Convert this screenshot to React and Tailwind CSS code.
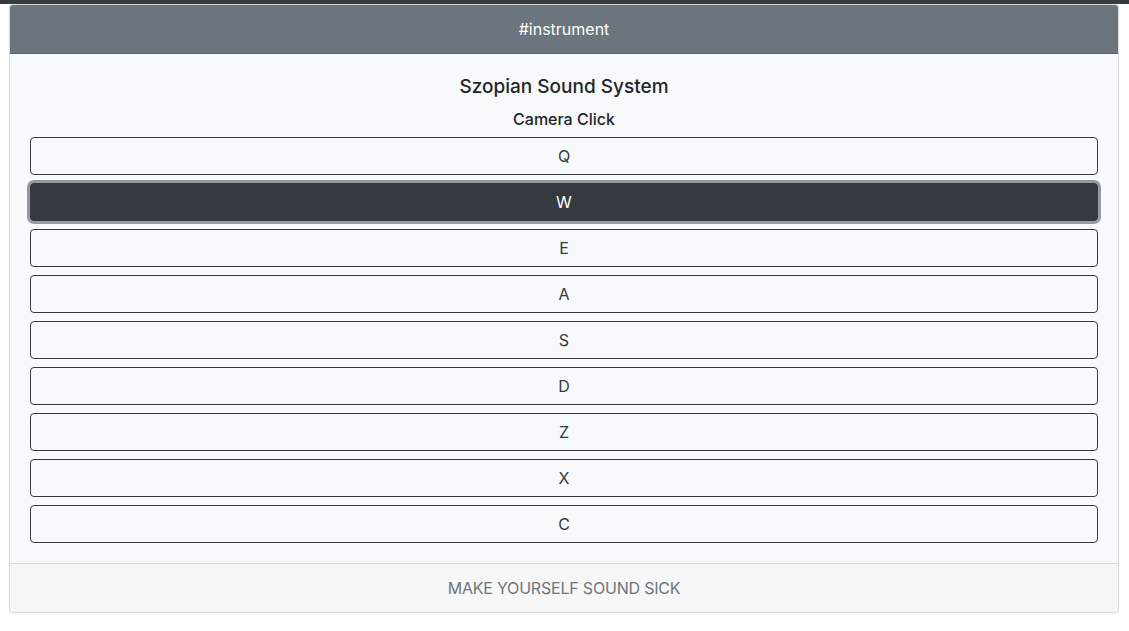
const KEYS = ['Q', 'W', 'E', 'A', 'S', 'D', 'Z', 'X', 'C'];

function PadButton({ label, active }) {
  return (
    <button
      className={`block h-[38px] w-full rounded-[4px] border border-[#343a40] text-base leading-6 ${
        active
          ? 'bg-[#343a40] text-white shadow-[0_0_0_3px_rgba(130,138,145,0.85)]'
          : 'bg-transparent text-[#343a40]'
      }`}
    >
      {label}
    </button>
  );
}

export default function App() {
  return (
    <div className="min-h-screen bg-white font-['Inter','Helvetica_Neue',Arial,sans-serif] text-[#212529]">
      <div className="h-[4px] bg-[#343a40]" />
      <div className="ml-[9px] mr-[10px] overflow-hidden rounded-[4px] border border-black/[0.125] bg-[#f8f9fa]">
        {/* header */}
        <div className="border-b border-black/[0.125] bg-[#6c757d] px-5 py-3 text-center text-base leading-6 text-white">
          #instrument
        </div>

        {/* body */}
        <div className="px-5 py-5">
          <h1 className="mt-[1px] text-center text-[19px] font-medium leading-6">Szopian Sound System</h1>
          <h2 className="mt-[8px] text-center text-base font-medium leading-6">Camera Click</h2>
          <div className="mt-[6px] flex flex-col gap-2">
            {KEYS.map((k) => (
              <PadButton key={k} label={k} active={k === 'W'} />
            ))}
          </div>
        </div>

        {/* footer */}
        <div className="border-t border-black/[0.125] bg-[#f7f7f7] px-5 py-3 text-center text-base leading-6 tracking-[-0.2px] text-[#6c757d]">
          MAKE YOURSELF SOUND SICK
        </div>
      </div>
    </div>
  );
}
